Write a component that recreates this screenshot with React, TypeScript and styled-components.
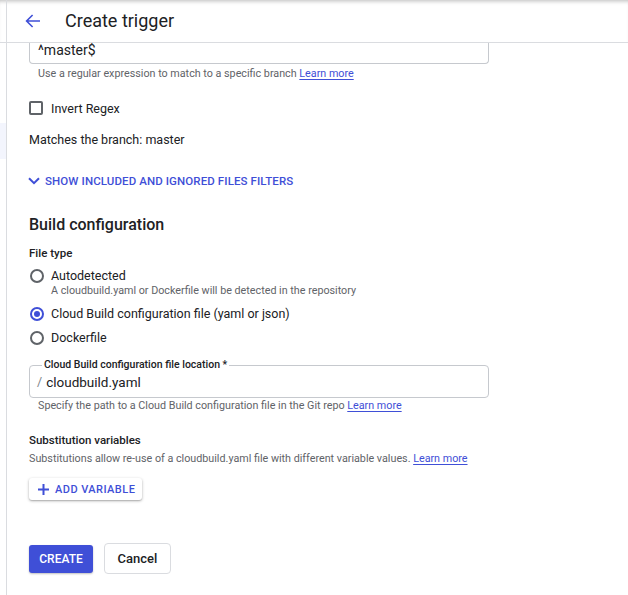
import styled, { createGlobalStyle } from "styled-components";

const BLUE = "#3f4fd7";

const GlobalStyle = createGlobalStyle`
  html, body {
    margin: 0;
    padding: 0;
    background: #fff;
  }
  body {
    font-family: Roboto, "Liberation Sans", Arial, sans-serif;
    color: #202124;
  }
  #root {
    height: 595px;
    overflow: hidden;
  }
`;

const Page = styled.div`
  display: flex;
  flex-direction: column;
  width: 628px;
  height: 595px;
  overflow: hidden;
`;

const Header = styled.header`
  display: flex;
  align-items: stretch;
  height: 42px;
  flex-shrink: 0;
  border-bottom: 1px solid #dadce0;
  background: #fff;
  box-shadow: inset 0 4px 4px -3px rgba(0, 0, 0, 0.28);
`;

const HeaderRail = styled.div`
  width: 6px;
  border-right: 1px solid #dadce0;
`;

const BackButton = styled.button`
  display: flex;
  align-items: center;
  justify-content: center;
  width: 24px;
  height: 24px;
  margin: 9px 0 0 14px;
  padding: 0;
  border: none;
  background: none;
  color: ${BLUE};
  cursor: pointer;
`;

const Title = styled.h1`
  margin: 0 0 0 20px;
  font-size: 18px;
  font-weight: 400;
  line-height: 42px;
  color: #202124;
`;

const Body = styled.div`
  display: flex;
  flex: 1;
  min-height: 0;
`;

const Sidebar = styled.nav`
  width: 6px;
  flex-shrink: 0;
  padding-top: 80px;
  border-right: 1px solid #dadce0;
`;

const NavMark = styled.div`
  height: 36px;
  background: #f3f5fd;
`;

const Main = styled.main`
  flex: 1;
  overflow: hidden;
  padding-left: 22px;
`;

const Form = styled.div`
  width: 460px;
  display: flex;
  flex-direction: column;
  align-items: flex-start;
`;

const TextBox = styled.div`
  box-sizing: border-box;
  width: 100%;
  height: 41px;
  margin-top: -20px;
  padding: 20px 8px 0;
  border: 1px solid #c6c9ce;
  border-top: none;
  border-radius: 0 0 4px 4px;
  font-size: 14px;
  line-height: 14px;
`;

const Helper = styled.div<{ $indent?: boolean; $gap?: number }>`
  margin-top: ${(p) => p.$gap ?? 0}px;
  padding-left: ${(p) => (p.$indent ? 9 : 0)}px;
  font-size: 10.75px;
  line-height: 16px;
  color: #5f6368;
`;

const Link = styled.a`
  color: ${BLUE};
  text-decoration: underline;
  text-underline-offset: 2px;
  cursor: pointer;
`;

const CheckRow = styled.label`
  display: flex;
  align-items: center;
  height: 18px;
  margin-top: 17px;
  font-size: 12.5px;
`;

const CheckBox = styled.span`
  box-sizing: border-box;
  width: 14px;
  height: 14px;
  margin-right: 8px;
  border: 2px solid #5f6368;
  border-radius: 2px;
`;

const Text = styled.div<{ $gap?: number }>`
  margin-top: ${(p) => p.$gap ?? 0}px;
  font-size: 12.5px;
  line-height: 16px;
`;

const FilterToggle = styled.button`
  display: flex;
  align-items: center;
  height: 16px;
  margin-top: 25px;
  padding: 0;
  border: none;
  background: none;
  color: ${BLUE};
  font-family: inherit;
  font-size: 11.5px;
  font-weight: 500;
  letter-spacing: 0.1px;
  text-transform: uppercase;
  cursor: pointer;

  svg {
    margin: 0 5px 0 -1px;
  }
`;

const SectionTitle = styled.h2`
  margin: 24px 0 0;
  font-size: 16px;
  font-weight: 500;
  line-height: 24px;
`;

const FieldLabel = styled.div<{ $gap: number }>`
  margin-top: ${(p) => p.$gap}px;
  font-size: 11.5px;
  font-weight: 500;
  line-height: 16px;
`;

const RadioGroup = styled.div`
  display: flex;
  flex-direction: column;
  margin-top: 3px;
`;

const RadioOption = styled.label`
  display: flex;
  align-items: flex-start;
  padding: 4px 0;
  font-size: 12.5px;
  line-height: 16px;
`;

const RadioCircle = styled.span<{ $checked?: boolean }>`
  box-sizing: border-box;
  display: flex;
  align-items: center;
  justify-content: center;
  width: 14px;
  height: 14px;
  margin: 1px 7px 0 1px;
  border: 2px solid ${(p) => (p.$checked ? BLUE : "#5f6368")};
  border-radius: 50%;

  &::after {
    content: "";
    display: ${(p) => (p.$checked ? "block" : "none")};
    width: 6px;
    height: 6px;
    border-radius: 50%;
    background: ${BLUE};
  }
`;

const OptionSub = styled.div`
  font-size: 10.75px;
  line-height: 14px;
  color: #5f6368;
`;

const OutlinedField = styled.div`
  position: relative;
  box-sizing: border-box;
  display: flex;
  align-items: center;
  width: 100%;
  height: 33px;
  margin-top: 15px;
  padding-left: 7px;
  border: 1px solid #c6c9ce;
  border-radius: 4px;
  font-size: 13.5px;
`;

const OutlinedLabel = styled.span`
  position: absolute;
  top: -7px;
  left: 12px;
  padding: 0 2px;
  background: #fff;
  font-size: 10.5px;
  font-weight: 500;
  line-height: 12px;
  color: #202124;
`;

const Prefix = styled.span`
  margin-right: 4px;
  color: #80868b;
  font-size: 12.5px;
`;

const AddButton = styled.button`
  display: flex;
  align-items: center;
  gap: 6px;
  height: 22px;
  margin-top: 11px;
  padding: 0 7px 0 9px;
  border: none;
  border-radius: 3px;
  background: #fff;
  box-shadow: 0 1px 3px rgba(0, 0, 0, 0.3), 0 1px 1px rgba(0, 0, 0, 0.1);
  color: ${BLUE};
  font-family: inherit;
  font-size: 11px;
  font-weight: 500;
  letter-spacing: 0.45px;
  cursor: pointer;
`;

const Actions = styled.div`
  display: flex;
  align-items: center;
  gap: 11px;
  margin-top: 43px;
`;

const Button = styled.button<{ $primary?: boolean }>`
  box-sizing: border-box;
  height: ${(p) => (p.$primary ? 28 : 31)}px;
  width: ${(p) => (p.$primary ? 64 : 67)}px;
  padding: 0;
  border: ${(p) => (p.$primary ? "none" : "1px solid #dadce0")};
  border-radius: ${(p) => (p.$primary ? 3 : 4)}px;
  background: ${(p) => (p.$primary ? BLUE : "#fff")};
  box-shadow: ${(p) => (p.$primary ? "0 1px 2px rgba(0,0,0,0.25)" : "none")};
  color: ${(p) => (p.$primary ? "#fff" : "#202124")};
  font-family: inherit;
  font-size: ${(p) => (p.$primary ? 12 : 13)}px;
  font-weight: 500;
  cursor: pointer;
`;

const BackArrow = () => (
  <svg width="16" height="14" viewBox="0 0 16 14" fill="none">
    <path d="M15 7H1.6M7.6 1L1.6 7l6 6" stroke="currentColor" strokeWidth="1.6" />
  </svg>
);

const Chevron = () => (
  <svg width="12" height="8" viewBox="0 0 12 8" fill="none">
    <path d="M1 1.2l5 5 5-5" stroke="currentColor" strokeWidth="2" />
  </svg>
);

const Plus = () => (
  <svg width="11" height="11" viewBox="0 0 11 11" fill="none">
    <path d="M5.5 0v11M0 5.5h11" stroke="currentColor" strokeWidth="2" />
  </svg>
);

function App() {
  return (
    <Page>
      <GlobalStyle />
      <Header>
        <HeaderRail />
        <BackButton aria-label="Back">
          <BackArrow />
        </BackButton>
        <Title>Create trigger</Title>
      </Header>
      <Body>
        <Sidebar>
          <NavMark />
        </Sidebar>
        <Main>
          <Form>
            <TextBox>^master$</TextBox>
            <Helper $indent $gap={2}>
              Use a regular expression to match to a specific branch <Link>Learn more</Link>
            </Helper>
            <CheckRow>
              <CheckBox />
              Invert Regex
            </CheckRow>
            <Text $gap={15}>Matches the branch: master</Text>
            <FilterToggle>
              <Chevron />
              Show included and ignored files filters
            </FilterToggle>

            <SectionTitle>Build configuration</SectionTitle>
            <FieldLabel $gap={8}>File type</FieldLabel>
            <RadioGroup>
              <RadioOption>
                <RadioCircle />
                <div>
                  Autodetected
                  <OptionSub>A cloudbuild.yaml or Dockerfile will be detected in the repository</OptionSub>
                </div>
              </RadioOption>
              <RadioOption>
                <RadioCircle $checked />
                Cloud Build configuration file (yaml or json)
              </RadioOption>
              <RadioOption>
                <RadioCircle />
                Dockerfile
              </RadioOption>
            </RadioGroup>

            <OutlinedField>
              <OutlinedLabel>Cloud Build configuration file location *</OutlinedLabel>
              <Prefix>/</Prefix>
              cloudbuild.yaml
            </OutlinedField>
            <Helper $indent>
              Specify the path to a Cloud Build configuration file in the Git repo <Link>Learn more</Link>
            </Helper>

            <FieldLabel $gap={18}>Substitution variables</FieldLabel>
            <Helper $gap={3}>
              Substitutions allow re-use of a cloudbuild.yaml file with different variable values.{" "}
              <Link>Learn more</Link>
            </Helper>
            <AddButton>
              <Plus />
              ADD VARIABLE
            </AddButton>

            <Actions>
              <Button $primary>CREATE</Button>
              <Button>Cancel</Button>
            </Actions>
          </Form>
        </Main>
      </Body>
    </Page>
  );
}

export default App;
